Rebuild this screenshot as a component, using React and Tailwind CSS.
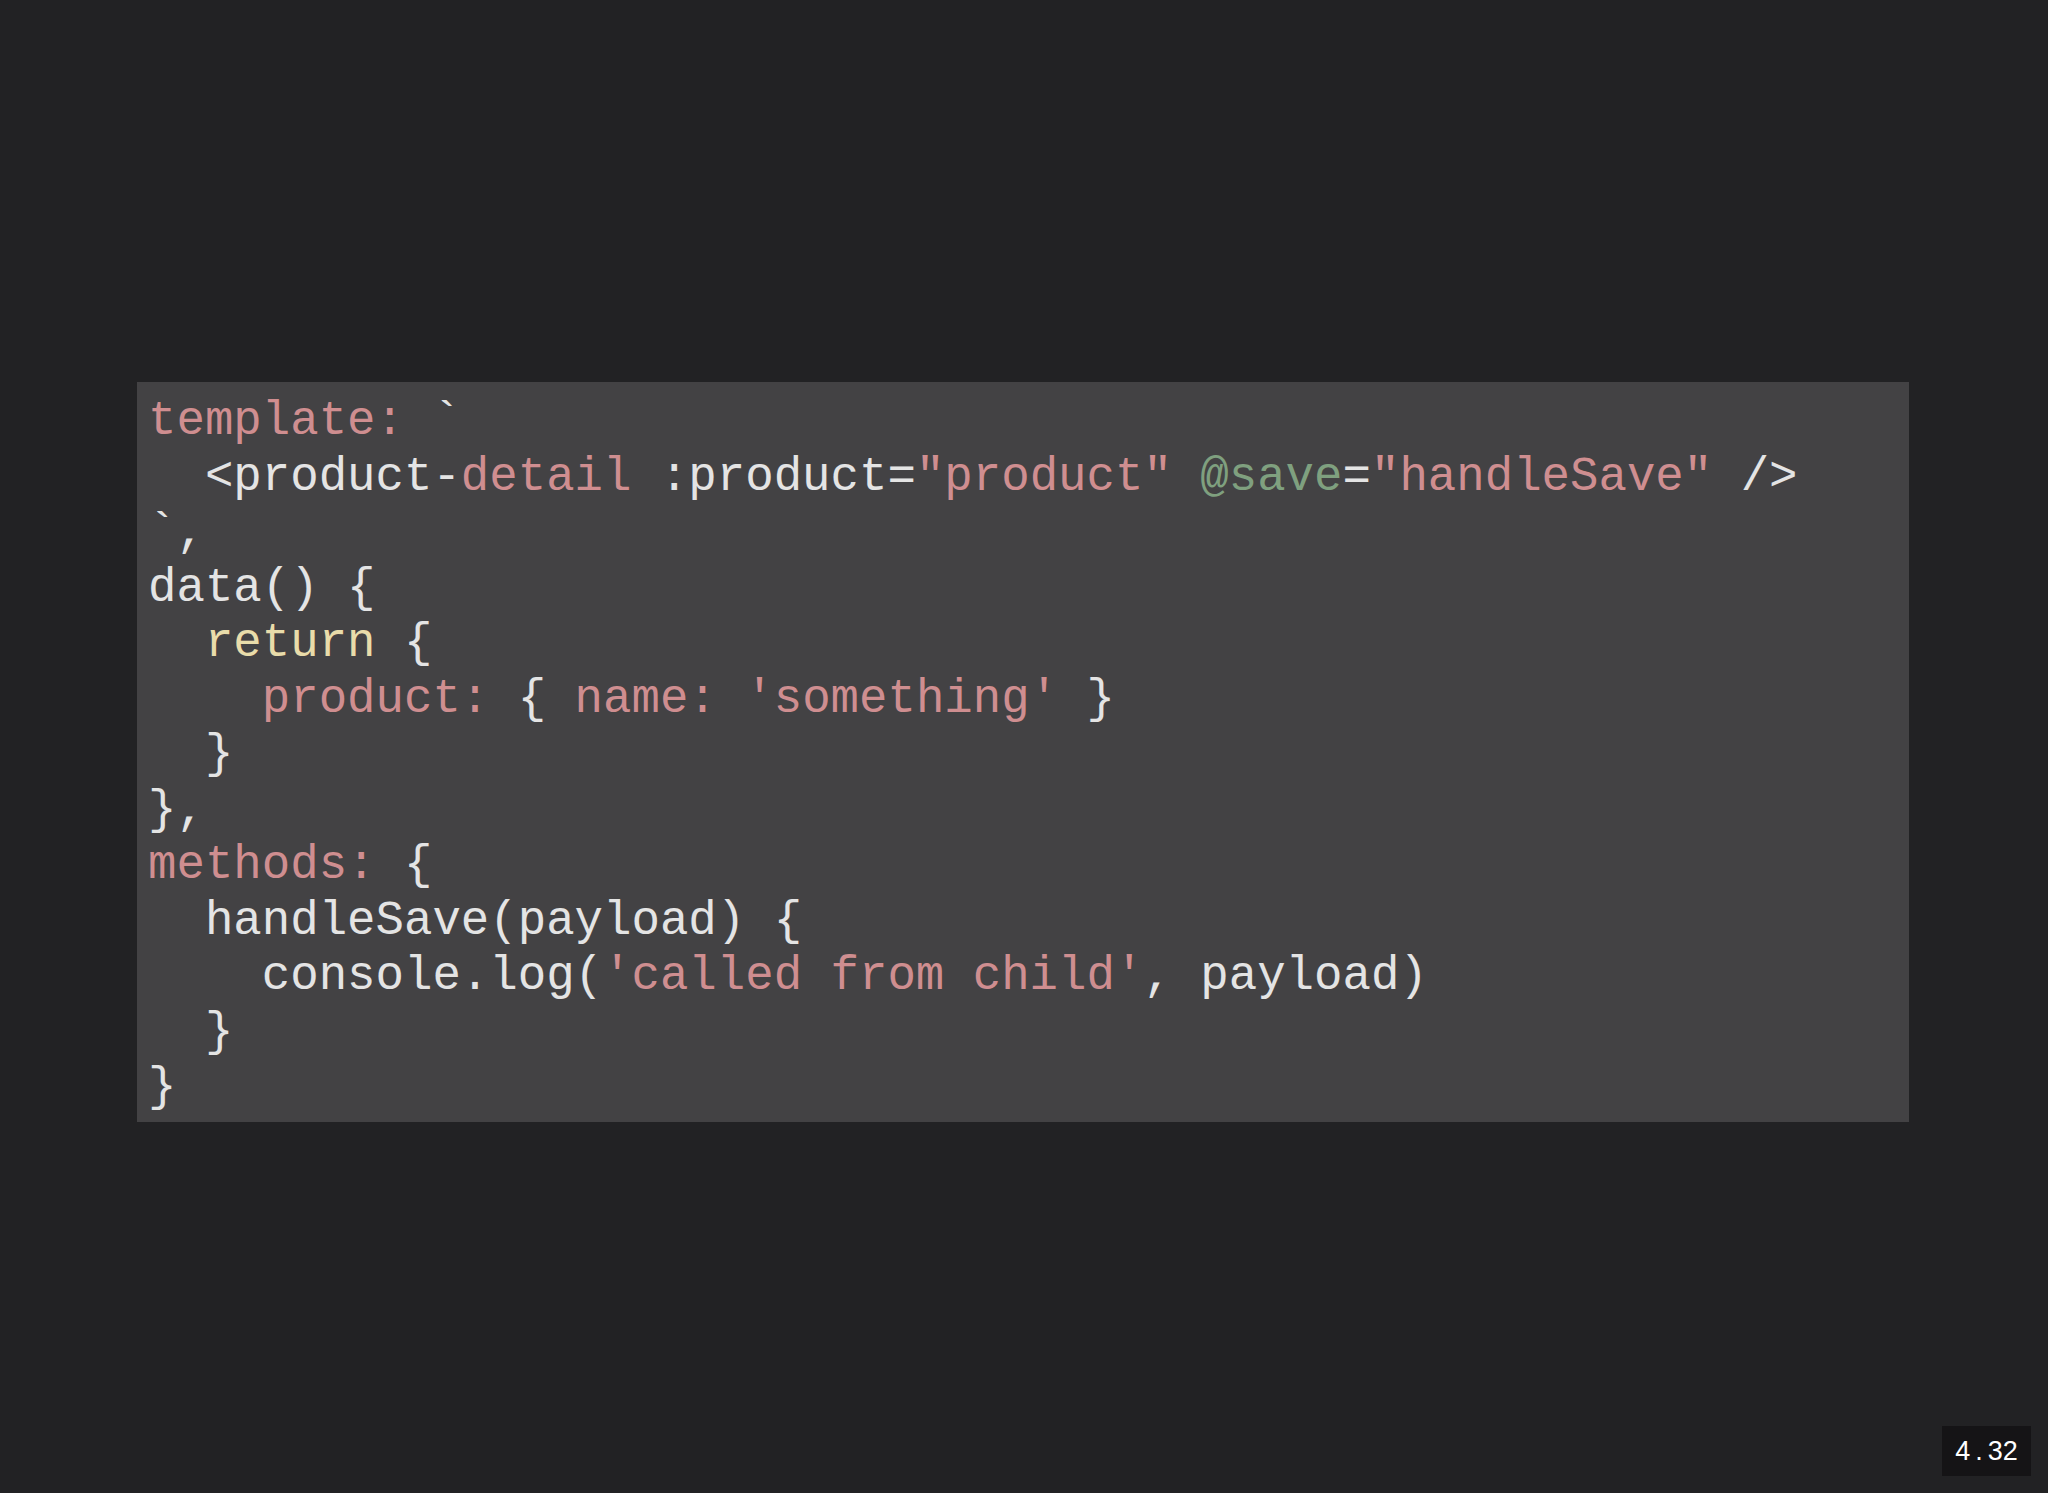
import React from "react";

const P = "text-[#cf8e90]";
const W = "text-[#e4e4e4]";
const Y = "text-[#e9dcaa]";
const G = "text-[#7fa07f]";

const lines = [
  [[P, "template:"], [W, " `"]],
  [[W, "  <product-"], [P, "detail"], [W, " :product="], [P, "\"product\""], [W, " "], [G, "@save"], [W, "="], [P, "\"handleSave\""], [W, " />"]],
  [[W, "`,"]],
  [[W, "data() {"]],
  [[W, "  "], [Y, "return"], [W, " {"]],
  [[W, "    "], [P, "product:"], [W, " { "], [P, "name:"], [W, " "], [P, "'something'"], [W, " }"]],
  [[W, "  }"]],
  [[W, "},"]],
  [[P, "methods:"], [W, " {"]],
  [[W, "  handleSave(payload) {"]],
  [[W, "    console.log("], [P, "'called from child'"], [W, ", payload)"]],
  [[W, "  }"]],
  [[W, "}"]],
];

export default function App() {
  return (
    <div className="relative w-[2048px] h-[1493px] bg-[#222224] overflow-hidden">
      <div className="pt-[382px] pl-[137px]">
        <div
          className="w-[1772px] h-[740px] bg-[#434244] pl-[11px] pt-[12px]"
          style={{ fontFamily: '"Liberation Mono", "Courier New", monospace' }}
        >
          {lines.map((segs, i) => (
            <div key={i} className="text-[47.4px] leading-[55.5px] whitespace-pre">
              {segs.map(([c, t], j) => (
                <span key={j} className={c}>
                  {t}
                </span>
              ))}
            </div>
          ))}
        </div>
      </div>
      <div
        className="absolute left-[1942px] top-[1426px] w-[89px] h-[50px] bg-[#151416] flex items-center justify-center text-white text-[27px]"
        style={{ fontFamily: '"Liberation Sans", Arial, sans-serif' }}
      >
        4<span className="mx-[5px]">.</span>32
      </div>
    </div>
  );
}
